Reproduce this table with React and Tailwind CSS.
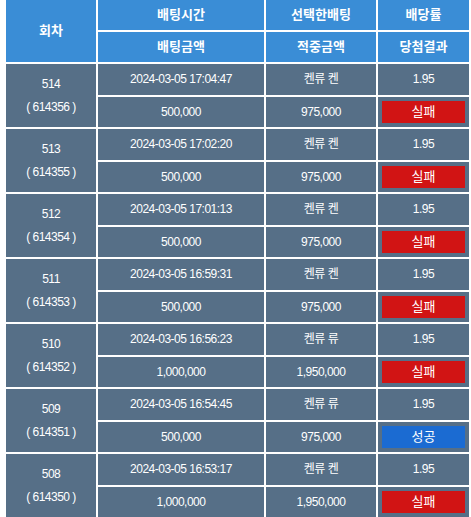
import React from "react";

const rows = [
  ["514", "614356", "2024-03-05 17:04:47", "켄류 켄", "500,000", "975,000", false],
  ["513", "614355", "2024-03-05 17:02:20", "켄류 켄", "500,000", "975,000", false],
  ["512", "614354", "2024-03-05 17:01:13", "켄류 켄", "500,000", "975,000", false],
  ["511", "614353", "2024-03-05 16:59:31", "켄류 켄", "500,000", "975,000", false],
  ["510", "614352", "2024-03-05 16:56:23", "켄류 류", "1,000,000", "1,950,000", false],
  ["509", "614351", "2024-03-05 16:54:45", "켄류 류", "500,000", "975,000", true],
  ["508", "614350", "2024-03-05 16:53:17", "켄류 켄", "1,000,000", "1,950,000", false],
];

const font = { fontFamily: '"Liberation Sans", "Noto Sans CJK KR", sans-serif' };

function H({ children, className = "" }) {
  return (
    <div className={"bg-[#3a8dd6] text-white font-bold text-[13px] flex items-center justify-center " + className}>
      {children}
    </div>
  );
}

function C({ children, className = "" }) {
  return (
    <div className={"bg-[#566f87] text-white text-[12px] tracking-[-0.5px] flex items-center justify-center " + className}>
      {children}
    </div>
  );
}

export default function App() {
  return (
    <div className="w-[471px] h-[517px] bg-white overflow-hidden" style={font}>
      <div className="ml-[6px] w-[463px] grid grid-cols-[90px_166px_110px_91px] grid-rows-[30px_30px_repeat(14,30.5px)] gap-[2px] bg-white">
        <H className="row-span-2">회차</H>
        <H>배팅시간</H>
        <H>선택한배팅</H>
        <H>배당률</H>
        <H>배팅금액</H>
        <H>적중금액</H>
        <H>당첨결과</H>
        {rows.map((r) => (
          <React.Fragment key={r[0]}>
            <C className="row-span-2 flex-col gap-[5px]">
              <span>{r[0]}</span>
              <span>(&nbsp;{r[1]}&nbsp;)</span>
            </C>
            <C>{r[2]}</C>
            <C>{r[3]}</C>
            <C>1.95</C>
            <C>{r[4]}</C>
            <C>{r[5]}</C>
            <C className="px-[4px]">
              <span
                className={
                  "w-full h-[22px] flex items-center justify-center text-[13px] tracking-normal " +
                  (r[6] ? "bg-[#1b6bd2]" : "bg-[#d11414]")
                }
              >
                {r[6] ? "성공" : "실패"}
              </span>
            </C>
          </React.Fragment>
        ))}
      </div>
    </div>
  );
}
